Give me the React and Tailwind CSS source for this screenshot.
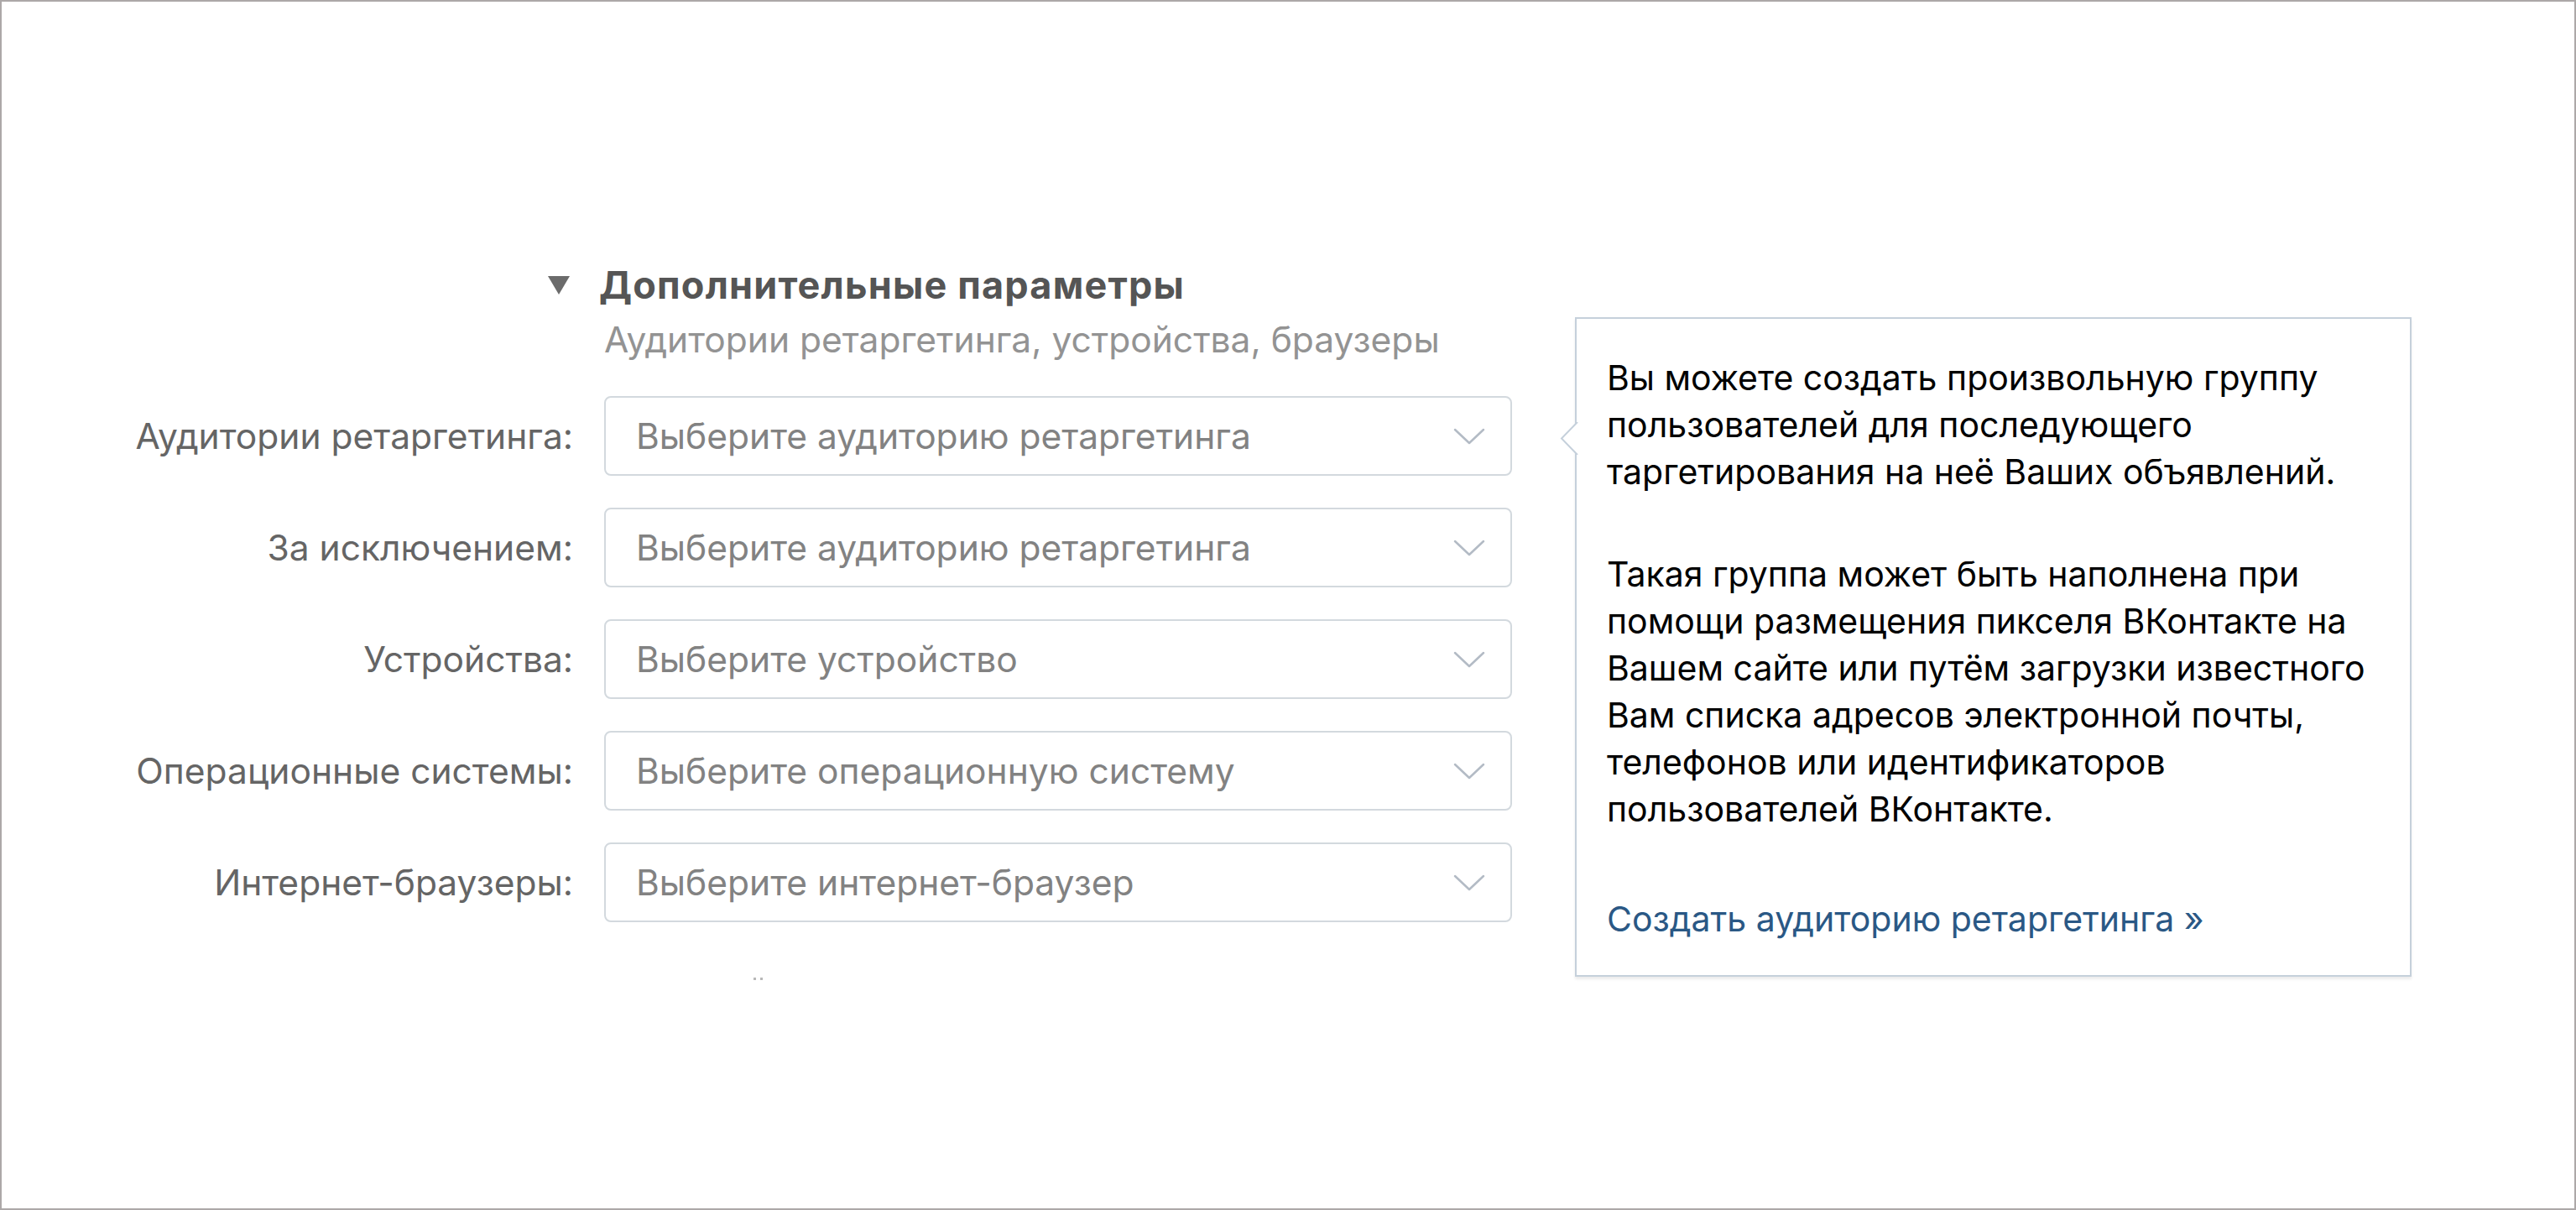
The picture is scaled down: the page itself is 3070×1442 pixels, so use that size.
import React from "react";

const rows = [
  { label: "Аудитории ретаргетинга:", placeholder: "Выберите аудиторию ретаргетинга" },
  { label: "За исключением:", placeholder: "Выберите аудиторию ретаргетинга" },
  { label: "Устройства:", placeholder: "Выберите устройство" },
  { label: "Операционные системы:", placeholder: "Выберите операционную систему" },
  { label: "Интернет-браузеры:", placeholder: "Выберите интернет-браузер" },
];

const Chevron = () => (
  <svg width="38" height="20" viewBox="0 0 38 20" fill="none">
    <path d="M2 2 L19 18 L36 2" stroke="#b3bbc5" strokeWidth="2.5" strokeLinecap="round" strokeLinejoin="round" />
  </svg>
);

const App = () => {
  return (
    <div
      className="relative w-[3070px] h-[1442px] bg-white border-2 border-[#aca8a8] overflow-hidden"
      style={{ fontFamily: "Inter, 'Noto Sans', sans-serif" }}
    >
      <div className="pt-[310px]">
        {/* header */}
        <div className="flex items-center ml-[651px] h-[56px]">
          <div className="w-0 h-0 border-l-[13px] border-r-[13px] border-t-[22px] border-l-transparent border-r-transparent border-t-[#6b6b6b]" />
          <span className="ml-[35px] text-[45px] tracking-[1.2px] font-bold text-[#555555] leading-[56px]">
            Дополнительные параметры
          </span>
        </div>
        <div className="ml-[718px] mt-[9px] text-[42.5px] text-[#939393] leading-[56px]">
          Аудитории ретаргетинга, устройства, браузеры
        </div>

        {/* rows */}
        <div className="mt-[39px] grid grid-cols-[681px_1082px] gap-x-[37px] gap-y-[38px]">
          {rows.map((r, i) => (
            <React.Fragment key={i}>
              <div className="flex items-center justify-end text-[42.5px] text-[#656565] whitespace-nowrap">
                {r.label}
              </div>
              <div className="h-[95px] flex items-center justify-between border-2 border-[#d3d9de] rounded-[8px] pl-[36px] pr-[30px] bg-white">
                <span className="text-[42.5px] text-[#828282] whitespace-nowrap">{r.placeholder}</span>
                <Chevron />
              </div>
            </React.Fragment>
          ))}
        </div>

        <div className="ml-[896px] mt-[66px] flex gap-[5px]">
          <span className="w-[3px] h-[3px] bg-[#b8b8b8]" />
          <span className="w-[3px] h-[3px] bg-[#b8b8b8]" />
        </div>
      </div>

      {/* tooltip */}
      <div className="absolute left-[1875px] top-[376px] w-[997px] bg-white border-2 border-[#c5d0db] shadow-[0_3px_3px_rgba(0,0,0,0.08)] pl-[36px] pr-[16px] pt-[42px] pb-[39px] text-[41px] leading-[56px] text-[#000000]">
        <svg className="absolute left-[-20px] top-[123px]" width="22" height="39" viewBox="0 0 22 39">
          <path d="M21 0 L2 19.5 L21 39" fill="white" stroke="#c5d0db" strokeWidth="2" />
          <rect x="20" y="2" width="3" height="35" fill="white" />
        </svg>
        <p className="whitespace-nowrap">
          Вы можете создать произвольную группу
          <br />
          пользователей для последующего
          <br />
          таргетирования на неё Ваших объявлений.
        </p>
        <p className="mt-[66px] whitespace-nowrap">
          Такая группа может быть наполнена при
          <br />
          помощи размещения пикселя ВКонтакте на
          <br />
          Вашем сайте или путём загрузки известного
          <br />
          Вам списка адресов электронной почты,
          <br />
          телефонов или идентификаторов
          <br />
          пользователей ВКонтакте.
        </p>
        <p className="mt-[75px] text-[#2a5885] whitespace-nowrap">Создать аудиторию ретаргетинга »</p>
      </div>
    </div>
  );
};

export default App;
